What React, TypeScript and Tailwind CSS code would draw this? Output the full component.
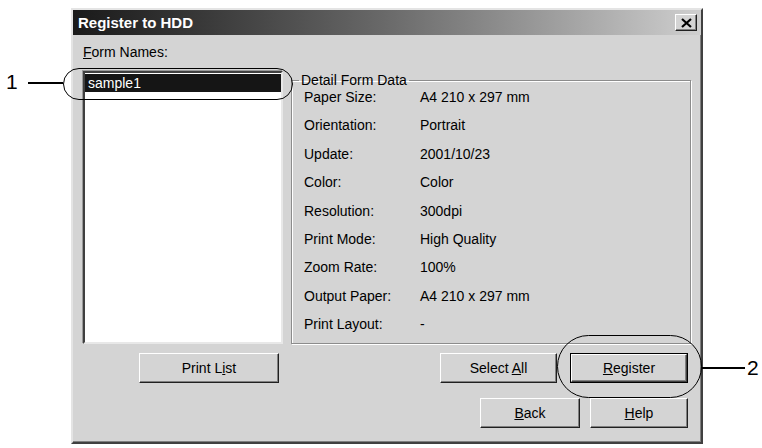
import React from "react";

const rows: [string, string][] = [
    ["Paper Size:", "A4 210 x 297 mm"],
    ["Orientation:", "Portrait"],
    ["Update:", "2001/10/23"],
    ["Color:", "Color"],
    ["Resolution:", "300dpi"],
    ["Print Mode:", "High Quality"],
    ["Zoom Rate:", "100%"],
    ["Output Paper:", "A4 210 x 297 mm"],
    ["Print Layout:", "-"],
];

const Btn = ({ className = "", children, isDefault = false }: { className?: string; children: React.ReactNode; isDefault?: boolean }) => {
    if (isDefault) {
        return (
            <div className={`h-[30px] border border-black ${className}`}>
                <div className="h-full border border-t-white border-l-white border-r-[#404040] border-b-[#404040] shadow-[inset_-1px_-1px_0_#808080] flex items-center justify-center text-[14px] text-black">
                    <span>{children}</span>
                </div>
            </div>
        );
    }
    return (
        <div className={`h-[30px] border border-t-white border-l-white border-r-[#202020] border-b-[#202020] shadow-[inset_-1px_-1px_0_#808080] flex items-center justify-center text-[14px] text-black ${className}`}>
            <span>{children}</span>
        </div>
    );
};

export default function App() {
    return (
        <div className="relative w-[762px] h-[448px] bg-white overflow-hidden font-['Liberation_Sans',Arial,sans-serif]">
            <div className="ml-[71px] pt-[8px]">
                <div className="w-[632px] h-[436px] bg-[#d4d4d4] border-2 border-t-[#e4e4e4] border-l-[#e4e4e4] border-r-[#404040] border-b-[#404040] shadow-[inset_-1px_-1px_0_#808080] flex flex-col">
                    {/* title bar */}
                    <div className="h-[25px] flex items-center justify-between pl-[5px] pr-[4px] bg-gradient-to-r from-[#1a1a1a] via-[#6a6a6a] to-[#cfcfcf]">
                        <span className="text-white font-bold text-[15px] leading-none">Register to HDD</span>
                        <div className="w-[22px] h-[17px] bg-[#d4d4d4] border border-t-white border-l-white border-r-[#202020] border-b-[#202020] shadow-[inset_-1px_-1px_0_#808080] flex items-center justify-center">
                            <svg width="11" height="10" viewBox="0 0 11 10">
                                <path d="M1 1 L10 9 M10 1 L1 9" stroke="#000" strokeWidth="2.2" />
                            </svg>
                        </div>
                    </div>

                    {/* body */}
                    <div className="flex-1 px-[10px]">
                        <div className="flex">
                            <div className="w-[200px] pt-[9px]">
                                <div className="h-[16px] leading-[16px] text-[14px] text-black">
                                    <span className="underline">F</span>orm Names:
                                </div>
                                <div className="mt-[11px] h-[273px] bg-white border-2 border-t-[#404040] border-l-[#404040] border-r-[#e8e8e8] border-b-[#e8e8e8] shadow-[-1px_-1px_0_#9a9a9a]">
                                    <div className="h-[18px] bg-[#151515] text-white text-[14px] leading-[18px] pl-[3px] mt-[1px]">sample1</div>
                                </div>
                            </div>

                            <fieldset className="ml-[8px] mt-[37px] w-[400px] h-[272px] border border-[#8c8c8c] shadow-[inset_1px_1px_0_#fff,1px_1px_0_#fff]">
                                <legend className="ml-[7px] px-[2px] text-[14px] leading-[16px] text-black">Detail Form Data</legend>
                                <div className="-mt-[5px] pl-[12px] grid grid-cols-[116px_1fr] text-[14px] text-black">
                                    {rows.map(([k, v]) => (
                                        <React.Fragment key={k}>
                                            <div className="leading-[28.4px]">{k}</div>
                                            <div className="leading-[28.4px]">{v}</div>
                                        </React.Fragment>
                                    ))}
                                </div>
                            </fieldset>
                        </div>

                        <div className="flex mt-[9px]">
                            <Btn className="ml-[56px] w-[140px]">
                                Print L<span className="underline">i</span>st
                            </Btn>
                            <Btn className="ml-[161px] w-[117px]">
                                Select <span className="underline">A</span>ll
                            </Btn>
                            <Btn isDefault className="ml-[13px] w-[118px]">
                                <span className="underline">R</span>egister
                            </Btn>
                        </div>
                        <div className="flex mt-[15px]">
                            <Btn className="ml-[397px] w-[100px]">
                                <span className="underline">B</span>ack
                            </Btn>
                            <Btn className="ml-[10px] w-[98px]">
                                <span className="underline">H</span>elp
                            </Btn>
                        </div>
                    </div>
                </div>
            </div>

            {/* callout 1 */}
            <div className="absolute left-[63px] top-[68px] w-[230px] h-[32px] rounded-full border-[1.5px] border-black" />
            <div className="absolute left-[28px] top-[82px] w-[35px] h-[2px] bg-black" />
            <div className="absolute left-[6px] top-[71px] text-[21px] leading-[22px] text-black">1</div>

            {/* callout 2 */}
            <div className="absolute left-[557px] top-[335px] w-[145px] h-[63px] rounded-full border-[1.5px] border-black" />
            <div className="absolute left-[702px] top-[367px] w-[43px] h-[2px] bg-black" />
            <div className="absolute left-[747px] top-[357px] text-[21px] leading-[22px] text-black">2</div>
        </div>
    );
}
